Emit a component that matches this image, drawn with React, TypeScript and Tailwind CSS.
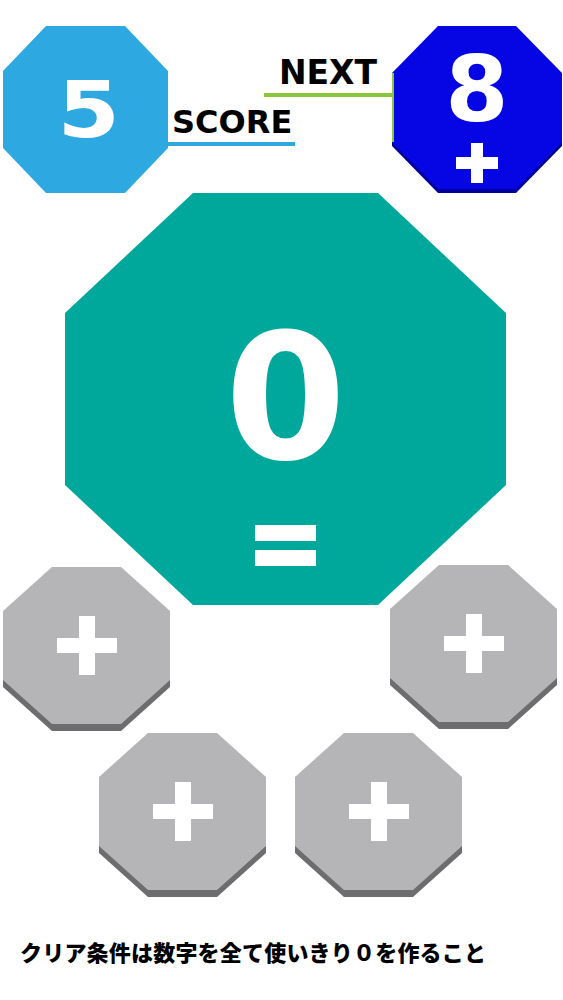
import type { ReactNode } from "react";

// Board colours picked from the reference
const SCORE_BLUE = "#2ea8e0";
const NEXT_BLUE = "#0606e4";
const NEXT_SHADOW = "#00009a";
const TEAL = "#00a89b";
const GRAY = "#b5b4b6";
const GRAY_SHADOW = "#6d6c6e";

type OctProps = {
  w: number;
  h: number;
  cx: number;
  cy: number;
  fill: string;
  shadow?: string;
  depth?: number;
  edge?: string;
  className: string;
  faceClass: string;
  children?: ReactNode;
};

function points(w: number, h: number, cx: number, cy: number, oy = 0) {
  return [
    [cx, 0],
    [w - cx, 0],
    [w, cy],
    [w, h - cy],
    [w - cx, h],
    [cx, h],
    [0, h - cy],
    [0, cy],
  ]
    .map(([x, y]) => `${x},${y + oy}`)
    .join(" ");
}

// Octagon tile: svg shape and its content stacked in one grid cell
function Octagon({ w, h, cx, cy, fill, shadow, depth = 0, edge, className, faceClass, children }: OctProps) {
  const fh = h - depth;
  return (
    <div className={`grid shrink-0 ${className}`}>
      <svg className="[grid-area:1/1]" width={w} height={h} viewBox={`0 0 ${w} ${h}`}>
        {shadow && <polygon points={points(w, fh, cx, cy, depth)} fill={shadow} />}
        <polygon points={points(w, fh, cx, cy)} fill={fill} />
        {edge && <line x1={1} y1={cy} x2={1} y2={fh - cy} stroke={edge} strokeWidth={2} />}
      </svg>
      <div className={`[grid-area:1/1] flex flex-col items-center ${faceClass}`}>{children}</div>
    </div>
  );
}

function Plus({ size, bar }: { size: string; bar: string }) {
  return (
    <div className={`grid place-items-center ${size}`}>
      <div className={`[grid-area:1/1] h-full bg-white ${bar.split(" ")[0]}`} />
      <div className={`[grid-area:1/1] w-full bg-white ${bar.split(" ")[1]}`} />
    </div>
  );
}

function OpButton({ className }: { className: string }) {
  return (
    <Octagon
      w={167}
      h={164}
      cx={49}
      cy={44}
      fill={GRAY}
      shadow={GRAY_SHADOW}
      depth={7}
      className={`w-[167px] h-[164px] ${className}`}
      faceClass="h-[157px] justify-center"
    >
      <Plus size="w-[60px] h-[59px]" bar="w-[16px] h-[15px]" />
    </Octagon>
  );
}

export default function App() {
  return (
    <div className="w-[563px] h-[1000px] overflow-hidden bg-white font-['DejaVu_Sans',sans-serif]">
      {/* header: score, labels, next piece */}
      <header className="flex items-start pt-[26px]">
        <Octagon
          w={165}
          h={167}
          cx={43}
          cy={45}
          fill={SCORE_BLUE}
          className="ml-[3px] w-[165px] h-[167px]"
          faceClass="h-[167px] justify-center"
        >
          <span className="pl-[6px] text-[78px] font-bold leading-none text-white scale-x-[1.15]">5</span>
        </Octagon>

        <div className="flex w-[224px] shrink-0 flex-col">
          <div className="flex flex-col items-end pt-[30px]">
            <span className="mr-[15px] text-[33px] font-bold leading-none text-black">NEXT</span>
            <div className="mt-[4px] h-[4px] w-[128px] bg-[#8cc63e]" />
          </div>
          <div className="flex flex-col items-start pt-[9px]">
            <span className="ml-[4px] text-[32px] font-bold leading-none text-black">SCORE</span>
            <div className="mt-[4px] h-[4px] w-[127px] bg-[#2ea8e0]" />
          </div>
        </div>

        <Octagon
          w={170}
          h={167}
          cx={46}
          cy={47}
          fill={NEXT_BLUE}
          shadow={NEXT_SHADOW}
          depth={4}
          edge="#8cc63e"
          className="w-[170px] h-[167px]"
          faceClass="h-[163px] pt-[18px]"
        >
          <span className="text-[91px] font-bold leading-none text-white">8</span>
          <div className="mt-[8px]">
            <Plus size="w-[42px] h-[40px]" bar="w-[12px] h-[12px]" />
          </div>
        </Octagon>
      </header>

      {/* target / current value */}
      <Octagon
        w={441}
        h={412}
        cx={128}
        cy={120}
        fill={TEAL}
        className="ml-[65px] w-[441px] h-[412px]"
        faceClass="h-[412px] pt-[119px]"
      >
        <span className="h-[174px] text-[174px] font-bold leading-none text-white">0</span>
        <div className="mt-[39px] flex flex-col gap-[9px]">
          <div className="h-[16px] w-[61px] bg-white" />
          <div className="h-[16px] w-[61px] bg-white" />
        </div>
      </Octagon>

      {/* operator pieces */}
      <div className="-mt-[40px] flex items-start">
        <OpButton className="ml-[3px] mt-[2px]" />
        <OpButton className="ml-[220px]" />
      </div>
      <div className="mt-[2px] flex items-start">
        <OpButton className="ml-[99px]" />
        <OpButton className="ml-[29px]" />
      </div>

      <p className="mt-[43px] pl-[20px] font-['Noto_Sans_CJK_JP',sans-serif] text-[22px] font-black leading-none tracking-[0.2px] text-black">
        クリア条件は数字を全て使いきり０を作ること
      </p>
    </div>
  );
}
